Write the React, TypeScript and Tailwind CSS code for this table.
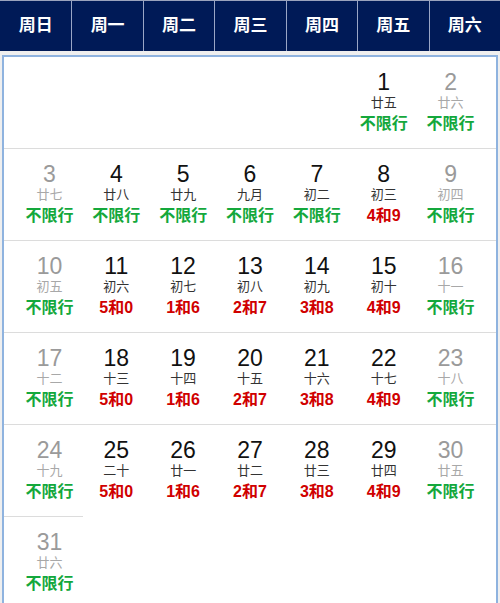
const WEEK = ['周日', '周一', '周二', '周三', '周四', '周五', '周六'];

const LUNAR = [
  '廿五', '廿六', '廿七', '廿八', '廿九', '九月', '初二', '初三', '初四', '初五',
  '初六', '初七', '初八', '初九', '初十', '十一', '十二', '十三', '十四', '十五',
  '十六', '十七', '十八', '十九', '二十', '廿一', '廿二', '廿三', '廿四', '廿五', '廿六',
];

const RULES: Record<number, string> = { 1: '5和0', 2: '1和6', 3: '2和7', 4: '3和8', 5: '4和9' };
const HOLIDAYS = [1, 4, 5, 6, 7];

type Day = { day: number; lunar: string; weekend: boolean; rule: string | null };

function buildWeeks() {
  const cells: (Day | null)[] = [null, null, null, null, null];
  for (let d = 1; d <= 31; d++) {
    const col = (d + 4) % 7;
    const weekend = col === 0 || col === 6;
    const rule = weekend || HOLIDAYS.includes(d) ? null : RULES[col];
    cells.push({ day: d, lunar: LUNAR[d - 1], weekend, rule });
  }
  const weeks: (Day | null)[][] = [];
  for (let i = 0; i < cells.length; i += 7) weeks.push(cells.slice(i, i + 7));
  return weeks;
}

function DayCell({ d }: { d: Day | null }) {
  if (!d) return <div />;
  return (
    <div className="flex flex-col items-center pt-[12px]">
      <div className={`text-[23px] leading-[26px] ${d.weekend ? 'text-[#9a9a9a]' : 'text-[#111]'}`}>{d.day}</div>
      <div className={`text-[13px] leading-[15px] ${d.weekend ? 'text-[#a8a8a8]' : 'text-[#333]'}`}>{d.lunar}</div>
      {d.rule ? (
        <div className="mt-[4px] text-[16px] leading-[20px] font-bold text-[#d00000]">{d.rule}</div>
      ) : (
        <div className="mt-[4px] text-[16px] leading-[20px] font-bold text-[#14a83c]">不限行</div>
      )}
    </div>
  );
}

export default function App() {
  const weeks = buildWeeks();

  return (
    <div
      className="w-[500px] h-[603px] overflow-hidden bg-[#efefef]"
      style={{ fontFamily: '"Liberation Sans", "Noto Sans CJK SC", sans-serif' }}
    >
      <div className="grid grid-cols-7 h-[51px] bg-[#001a57] border-t border-[#9aa3bd]">
        {WEEK.map((w, i) => (
          <div
            key={w}
            className={`flex items-center justify-center text-white font-bold text-[17px] ${i > 0 ? 'border-l border-[#9aa6c6]' : ''}`}
          >
            {w}
          </div>
        ))}
      </div>

      <div className="mt-[4px] mx-[2px] h-[560px] bg-white border-x-2 border-t-2 border-[#8fb3df]">
        {weeks.map((week, i) => {
          const last = i === weeks.length - 1;
          return (
            <div key={i} className="flex flex-col">
              {i > 0 && (
                <div className={`h-px bg-[#dcdcdc] ${last ? 'w-[79px]' : 'w-full'}`} />
              )}
              <div className="grid grid-cols-7 h-[91px] px-[12px]">
                {week.map((d, j) => (
                  <DayCell key={j} d={d} />
                ))}
              </div>
            </div>
          );
        })}
      </div>
    </div>
  );
}
